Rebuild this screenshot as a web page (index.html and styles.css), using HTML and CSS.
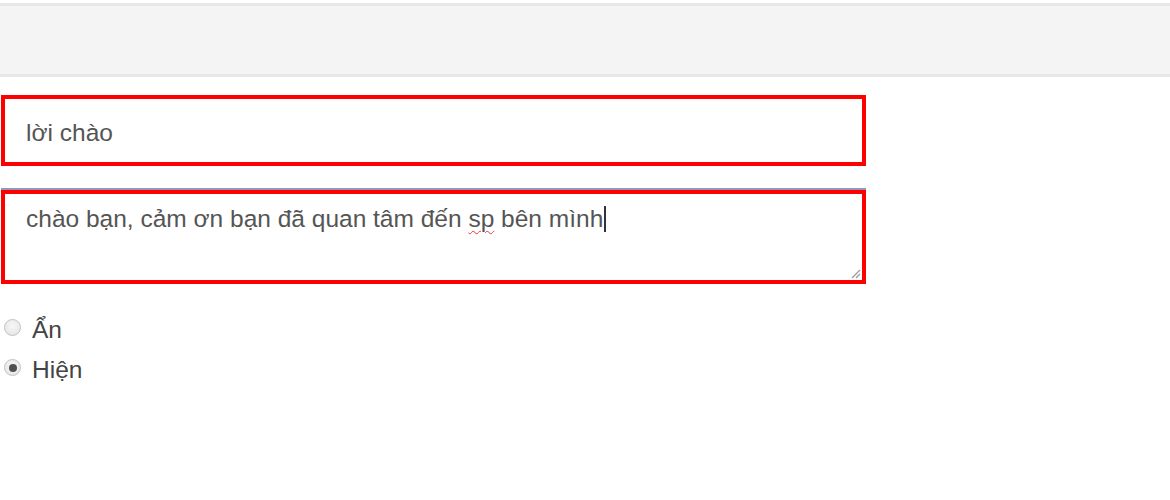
FILE: index.html
```html
<!DOCTYPE html>
<html lang="vi">
<head>
<meta charset="utf-8">
<title>Form</title>
<link rel="stylesheet" href="styles.css">
</head>
<body>
<div class="topbar"></div>
<form class="form">
  <div class="field field-input">lời chào</div>
  <div class="field field-area">chào bạn, cảm ơn bạn đã quan tâm đến <span class="typo">sp</span> bên mình<span class="caret"></span>
    <svg class="grip" width="12" height="12" viewBox="0 0 12 12"><path d="M11 3 L3 11 M11 7 L7 11" stroke="#9a9a9a" stroke-width="1.2" fill="none"/></svg>
  </div>
  <div class="radios">
    <label class="radio-row"><span class="radio"></span><span class="radio-label">Ẩn</span></label>
    <label class="radio-row"><span class="radio radio-on"></span><span class="radio-label">Hiện</span></label>
  </div>
</form>
</body>
</html>
```
FILE: styles.css
```css
html, body {
  margin: 0;
  padding: 0;
  background: #fff;
}
body {
  font-family: "Liberation Sans", Arial, sans-serif;
  color: #555;
  width: 1170px;
  height: 500px;
  overflow: hidden;
}
.topbar {
  margin-top: 3px;
  height: 68px;
  background: #f4f4f4;
  border-top: 3px solid #e7e7e7;
  border-bottom: 3px solid #e7e7e7;
}
.form {
  padding-left: 1px;
  padding-top: 18px;
}
.field {
  box-sizing: border-box;
  width: 865px;
  border: 4px solid #ff0000;
  font-size: 24.5px;
  background: #fff;
}
.field-input {
  height: 71px;
  padding: 19px 21px 0;
  line-height: 30px;
}
.field-area {
  position: relative;
  margin-top: 24px;
  height: 94px;
  padding: 10px 21px 0;
  line-height: 30px;
  box-shadow: 0 -2px 0 #8e9abb;
}
.typo {
  text-decoration: underline wavy #e23b3b;
  text-decoration-thickness: 1px;
  text-underline-offset: 3px;
}
.caret {
  display: inline-block;
  width: 2px;
  height: 26px;
  background: #333;
  vertical-align: -5px;
  margin-left: 1px;
}
.grip {
  position: absolute;
  right: 1px;
  bottom: 1px;
}
.radios {
  margin-top: 26px;
  display: flex;
  flex-direction: column;
}
.radio-row {
  display: flex;
  align-items: center;
  height: 40px;
  padding-left: 3px;
}
.radio {
  box-sizing: border-box;
  width: 17px;
  height: 17px;
  border-radius: 50%;
  border: 1px solid #c2c2c2;
  background: radial-gradient(circle at 50% 40%, #f7f7f7 0%, #e2e2e2 100%);
  margin-right: 11px;
  margin-bottom: 5px;
  display: flex;
  align-items: center;
  justify-content: center;
}
.radio-on::after {
  content: "";
  width: 8px;
  height: 8px;
  border-radius: 50%;
  background: #505050;
}
.radio-label {
  font-size: 24.5px;
  color: #444;
}
```
